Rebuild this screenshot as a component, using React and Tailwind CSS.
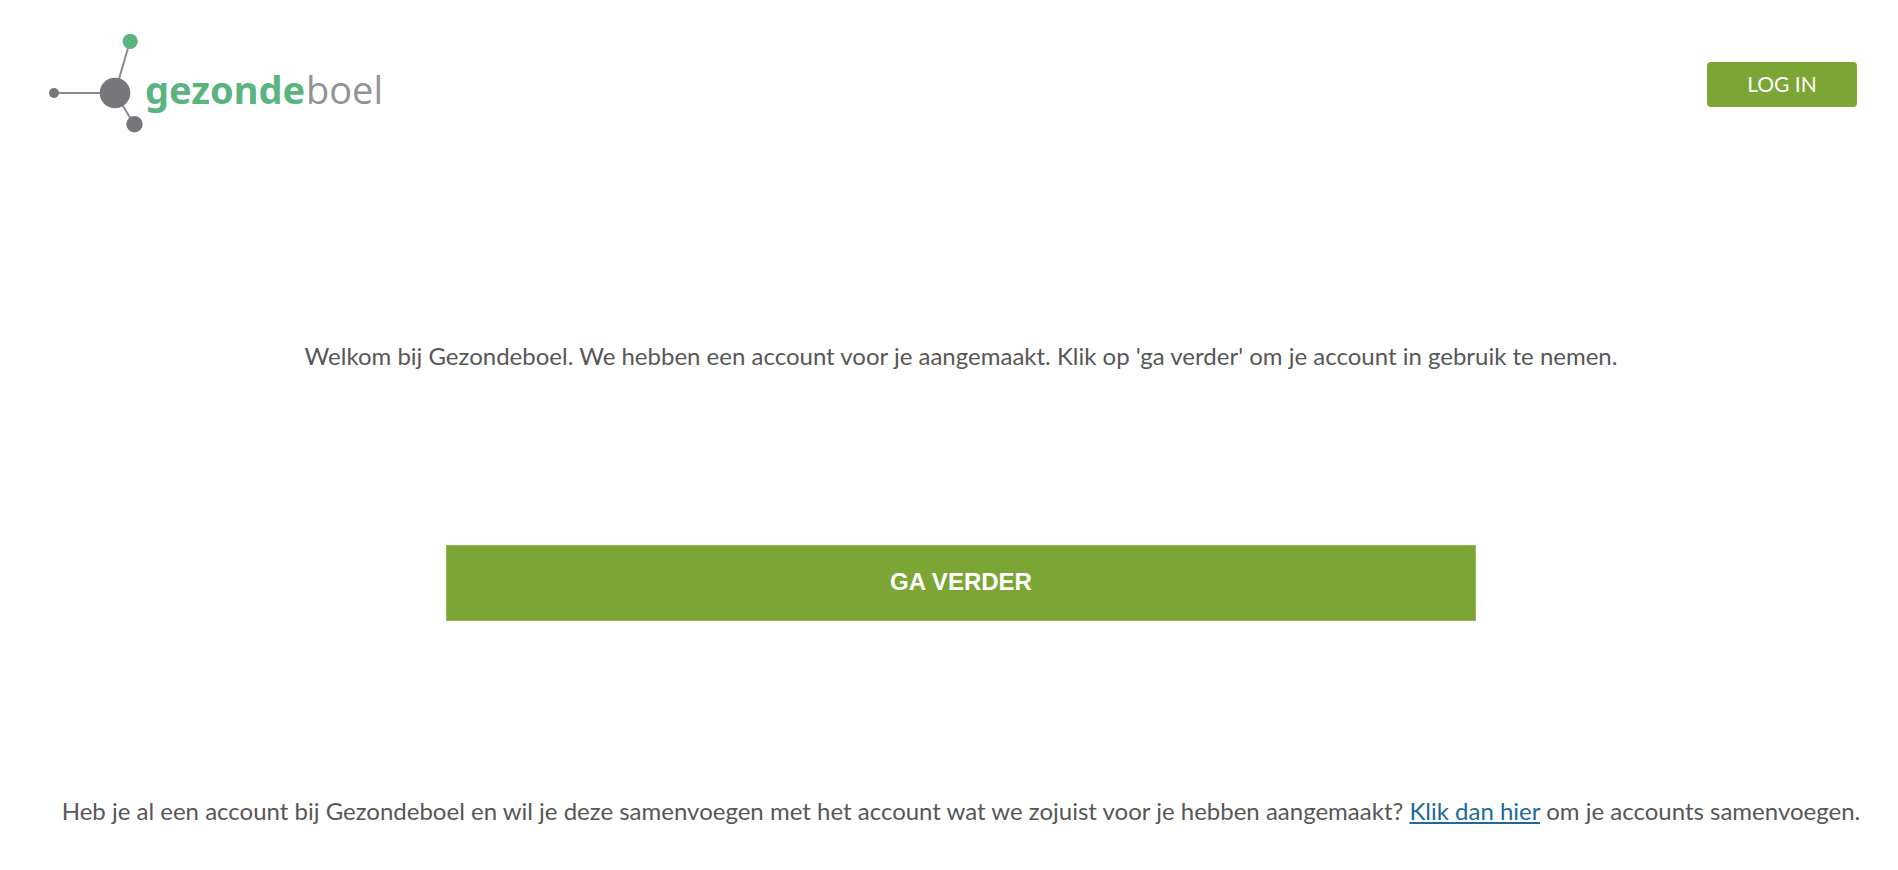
import { useState } from 'react';

function Logo() {
  return (
    <svg className="h-[108px] w-[350px]" viewBox="0 0 350 108" role="img" aria-label="gezondeboel">
      <g stroke="#8a8b8e" strokeWidth="2">
        <line x1="14" y1="65" x2="75" y2="65" />
        <line x1="75" y1="65" x2="90" y2="13" />
        <line x1="75" y1="65" x2="94" y2="96" />
      </g>
      <circle cx="14" cy="65" r="5" fill="#76777b" />
      <circle cx="75" cy="65" r="15.3" fill="#76777b" />
      <circle cx="94.5" cy="96.3" r="8.2" fill="#76777b" />
      <circle cx="90.2" cy="13.3" r="7.6" fill="#5bb37f" />
      <text x="105" y="76" fontSize="38" className="fill-[#5bb37f] font-['Noto_Sans',sans-serif] font-bold">
        gezonde
      </text>
      <text x="266" y="76" fontSize="38" className="fill-[#929396] font-['Open_Sans',sans-serif] font-normal">
        boel
      </text>
    </svg>
  );
}

export default function App() {
  const [isSubmitting, setIsSubmitting] = useState(false);

  const handleSubmit = (e) => {
    e.preventDefault();
    setIsSubmitting(true);
  };

  return (
    <div className="min-h-screen bg-white font-[Lato,sans-serif] text-[#575757]">
      <header className="flex items-start justify-between pt-7 pr-[41px] pl-10">
        <a href="#home">
          <Logo />
        </a>
        <button
          type="button"
          className="mt-[34px] h-[45px] w-[150px] rounded bg-[#7ba635] pb-[2px] text-[21px] text-white"
        >
          LOG IN
        </button>
      </header>

      <main className="flex flex-col items-center pt-[204px] pl-6 text-center text-2xl">
        <p>
          Welkom bij Gezondeboel. We hebben een account voor je aangemaakt. Klik op 'ga verder' om je account in gebruik te nemen.
        </p>

        <form onSubmit={handleSubmit} className="mt-[173px] w-[55%]">
          <button
            type="submit"
            disabled={isSubmitting}
            className="h-[76px] w-full border border-[#93b95b] bg-[#7ba635] pb-[2px] font-['Liberation_Sans',Arial,sans-serif] font-bold text-white"
          >
            GA VERDER
          </button>
        </form>

        <p className="mt-[174px]">
          Heb je al een account bij Gezondeboel en wil je deze samenvoegen met het account wat we zojuist voor je hebben aangemaakt?{' '}
          <a href="#samenvoegen" className="text-[#21699b] underline">
            Klik dan hier
          </a>{' '}
          om je accounts samenvoegen.
        </p>
      </main>
    </div>
  );
}
